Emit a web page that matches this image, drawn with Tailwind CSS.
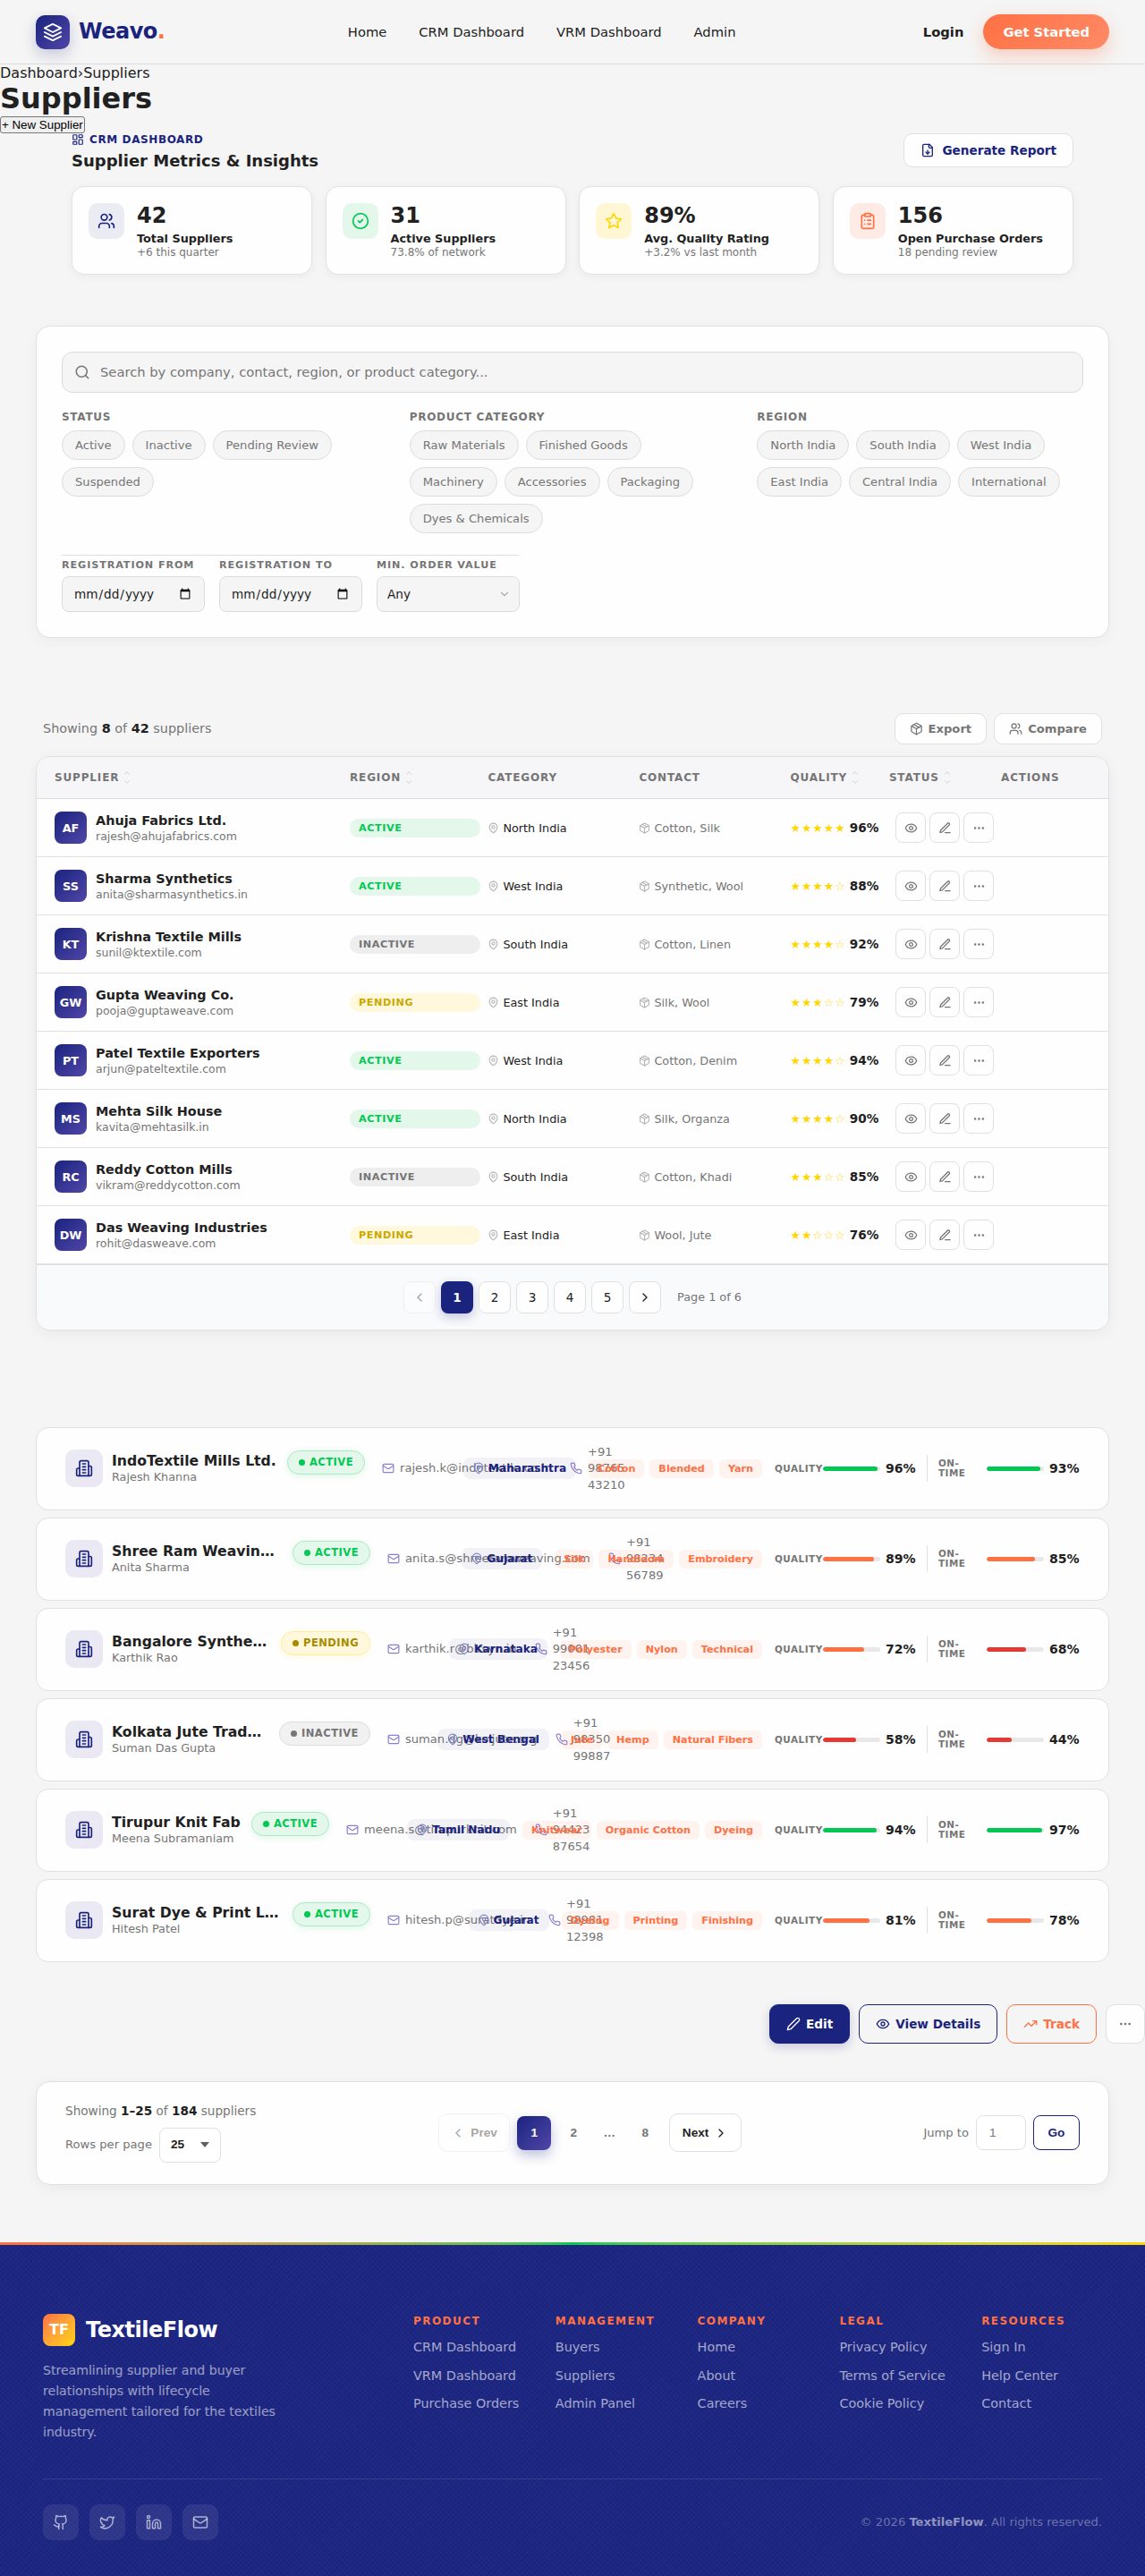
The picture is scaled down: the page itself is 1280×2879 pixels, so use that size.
<!DOCTYPE html>
<html lang="en">
<head>
<meta charset="utf-8">
<title>Weavo - Suppliers</title>
<script src="https://cdn.jsdelivr.net/npm/@tailwindcss/browser@4"></script>
</head>
<body class="w-[1280px] overflow-x-hidden bg-[#f5f5f5] font-['DejaVu_Sans',sans-serif] text-base leading-[1.2] text-[#212121]">

<svg class="hidden" xmlns="http://www.w3.org/2000/svg">
  <symbol id="layers" viewBox="0 0 24 24"><path d="m12 2 10 5-10 5L2 7z"/><path d="m2 12 10 5 10-5"/><path d="m2 17 10 5 10-5"/></symbol>
  <symbol id="grid" viewBox="0 0 24 24"><rect x="3" y="3" width="7" height="9" rx="1"/><rect x="14" y="3" width="7" height="5" rx="1"/><rect x="14" y="12" width="7" height="9" rx="1"/><rect x="3" y="16" width="7" height="5" rx="1"/></symbol>
  <symbol id="filedown" viewBox="0 0 24 24"><path d="M15 2H6a2 2 0 0 0-2 2v16a2 2 0 0 0 2 2h12a2 2 0 0 0 2-2V7Z"/><path d="M14 2v4a2 2 0 0 0 2 2h4"/><path d="M12 18v-6"/><path d="m9 15 3 3 3-3"/></symbol>
  <symbol id="users" viewBox="0 0 24 24"><path d="M16 21v-2a4 4 0 0 0-4-4H6a4 4 0 0 0-4 4v2"/><circle cx="9" cy="7" r="4"/><path d="M22 21v-2a4 4 0 0 0-3-3.870"/><path d="M16 3.130a4 4 0 0 1 0 7.750"/></symbol>
  <symbol id="check" viewBox="0 0 24 24"><circle cx="12" cy="12" r="10"/><path d="m9 12 2 2 4-4"/></symbol>
  <symbol id="star" viewBox="0 0 24 24"><polygon points="12 2 15.090 8.260 22 9.270 17 14.140 18.180 21.020 12 17.770 5.820 21.020 7 14.140 2 9.270 8.910 8.260 12 2"/></symbol>
  <symbol id="clip" viewBox="0 0 24 24"><rect x="8" y="2" width="8" height="4" rx="1"/><path d="M16 4h2a2 2 0 0 1 2 2v14a2 2 0 0 1-2 2H6a2 2 0 0 1-2-2V6a2 2 0 0 1 2-2h2"/><path d="M12 11h4M12 16h4M8 11h.01M8 16h.01"/></symbol>
  <symbol id="search" viewBox="0 0 24 24"><circle cx="11" cy="11" r="8"/><path d="m21 21-4.300-4.300"/></symbol>
  <symbol id="down" viewBox="0 0 24 24"><path d="m6 9 6 6 6-6"/></symbol>
  <symbol id="up" viewBox="0 0 24 24"><path d="m18 15-6-6-6 6"/></symbol>
  <symbol id="left" viewBox="0 0 24 24"><path d="m15 18-6-6 6-6"/></symbol>
  <symbol id="right" viewBox="0 0 24 24"><path d="m9 18 6-6-6-6"/></symbol>
  <symbol id="box" viewBox="0 0 24 24"><path d="m7.500 4.270 9 5.150"/><path d="M21 8a2 2 0 0 0-1-1.730l-7-4a2 2 0 0 0-2 0l-7 4A2 2 0 0 0 3 8v8a2 2 0 0 0 1 1.730l7 4a2 2 0 0 0 2 0l7-4A2 2 0 0 0 21 16Z"/><path d="m3.300 7 8.700 5 8.700-5"/><path d="M12 22V12"/></symbol>
  <symbol id="pin" viewBox="0 0 24 24"><path d="M20 10c0 6-8 12-8 12s-8-6-8-12a8 8 0 0 1 16 0Z"/><circle cx="12" cy="10" r="3"/></symbol>
  <symbol id="eye" viewBox="0 0 24 24"><path d="M2 12s3-7 10-7 10 7 10 7-3 7-10 7-10-7-10-7Z"/><circle cx="12" cy="12" r="3"/></symbol>
  <symbol id="penline" viewBox="0 0 24 24"><path d="M12 20h9"/><path d="M16.500 3.500a2.120 2.120 0 0 1 3 3L7 19l-4 1 1-4Z"/></symbol>
  <symbol id="pencil" viewBox="0 0 24 24"><path d="M17 3a2.850 2.830 0 1 1 4 4L7.500 20.500 2 22l1.500-5.500Z"/></symbol>
  <symbol id="dots" viewBox="0 0 24 24"><circle cx="12" cy="12" r="1"/><circle cx="19" cy="12" r="1"/><circle cx="5" cy="12" r="1"/></symbol>
  <symbol id="building" viewBox="0 0 24 24"><path d="M6 22V4a2 2 0 0 1 2-2h8a2 2 0 0 1 2 2v18Z"/><path d="M6 12H4a2 2 0 0 0-2 2v6a2 2 0 0 0 2 2h2"/><path d="M18 9h2a2 2 0 0 1 2 2v9a2 2 0 0 1-2 2h-2"/><path d="M10 6h4M10 10h4M10 14h4M10 18h4"/></symbol>
  <symbol id="mail" viewBox="0 0 24 24"><rect x="2" y="4" width="20" height="16" rx="2"/><path d="m22 7-8.970 5.700a1.940 1.940 0 0 1-2.060 0L2 7"/></symbol>
  <symbol id="phone" viewBox="0 0 24 24"><path d="M22 16.920v3a2 2 0 0 1-2.180 2 19.790 19.790 0 0 1-8.630-3.070 19.500 19.500 0 0 1-6-6 19.790 19.790 0 0 1-3.070-8.670A2 2 0 0 1 4.110 2h3a2 2 0 0 1 2 1.720 12.840 12.840 0 0 0 .7 2.810 2 2 0 0 1-.45 2.110L8.090 9.910a16 16 0 0 0 6 6l1.270-1.270a2 2 0 0 1 2.110-.45 12.840 12.840 0 0 0 2.810.7A2 2 0 0 1 22 16.920z"/></symbol>
  <symbol id="trend" viewBox="0 0 24 24"><path d="m22 7-8.500 8.500-5-5L2 17"/><path d="M16 7h6v6"/></symbol>
  <symbol id="github" viewBox="0 0 24 24"><path d="M15 22v-4a4.800 4.800 0 0 0-1-3.500c3 0 6-2 6-5.500.08-1.250-.27-2.480-1-3.500.28-1.150.28-2.350 0-3.500 0 0-1 0-3 1.500-2.640-.5-5.360-.5-8 0C6 2 5 2 5 2c-.3 1.150-.3 2.350 0 3.500A5.400 5.400 0 0 0 4 9c0 3.500 3 5.500 6 5.500-.39.490-.68 1.050-.85 1.650-.17.600-.22 1.230-.15 1.850v4"/><path d="M9 18c-4.510 2-5-2-7-2"/></symbol>
  <symbol id="twitter" viewBox="0 0 24 24"><path d="M22 4s-.7 2.100-2 3.400c1.600 10-9.400 17.300-18 11.600 2.200.1 4.400-.6 6-2C3 15.500.5 9.600 3 5c2.200 2.600 5.600 4.100 9 4-.9-4.200 4-6.600 7-3.800 1.100 0 3-1.200 3-1.200z"/></symbol>
  <symbol id="linkedin" viewBox="0 0 24 24"><path d="M16 8a6 6 0 0 1 6 6v7h-4v-7a2 2 0 0 0-4 0v7h-4v-7a6 6 0 0 1 6-6z"/><rect x="2" y="9" width="4" height="12"/><circle cx="4" cy="4" r="2"/></symbol>
</svg>

<header class="flex h-[72px] items-center justify-between border-b border-[#dcdcdc] px-10">
  <div class="flex items-center gap-2.5">
    <div class="flex size-[38px] items-center justify-center rounded-[10px] bg-linear-135 from-[#1a237e] to-[#5146a8] text-white shadow-[0_6px_16px_rgba(26,35,126,0.22)]"><svg class="size-[22px] fill-none stroke-current stroke-2 [stroke-linecap:round] [stroke-linejoin:round]"><use href="#layers"/></svg></div>
    <div class="text-2xl leading-[1.2] font-bold tracking-[-0.02em] text-[#1a237e]">Weavo<span class="text-[#ff7043]">.</span></div>
  </div>
  <nav class="mr-[5px] flex gap-9 text-[14.720px]"><a>Home</a><a>CRM Dashboard</a><a>VRM Dashboard</a><a>Admin</a></nav>
  <div class="flex items-center gap-[22px] text-[14.720px] font-bold">
    <a>Login</a>
    <a class="flex h-[39px] items-center rounded-full bg-linear-135 from-[#ff7043] to-[#ff8a65] px-[22px] text-white shadow-[0_8px_20px_rgba(255,112,67,0.3)]">Get Started</a>
  </div>
</header>

<div>Dashboard›Suppliers</div>
<h1 class="text-[32px] leading-[38.400px] font-bold">Suppliers</h1>
<div class="h-[19.400px]"><button class="block h-[19px] rounded-[3px] border border-[#767676] bg-[#efefef] px-px font-['Liberation_Sans',sans-serif] text-[13.333px] leading-[15px] text-black">+ New Supplier</button></div>

<section class="mx-20">
  <div class="flex h-[38px] items-start justify-between">
    <div>
      <div class="flex items-center gap-1.5 text-xs leading-[14px] font-bold tracking-[0.05em] text-[#1a237e]"><svg class="size-3.5 fill-none stroke-current stroke-2 [stroke-linecap:round] [stroke-linejoin:round]"><use href="#grid"/></svg>CRM DASHBOARD</div>
      <h2 class="mt-[6px] text-[18px] leading-[22px] font-bold">Supplier Metrics &amp; Insights</h2>
    </div>
    <button class="flex h-[38px] items-center gap-2 rounded-[10px] border border-[#e0e0e0] bg-[#fefefe] px-[18px] text-[13.600px] font-bold text-[#1a237e]"><svg class="size-4 fill-none stroke-current stroke-2 [stroke-linecap:round] [stroke-linejoin:round]"><use href="#filedown"/></svg>Generate Report</button>
  </div>
  <div id="metrics" class="mt-[21px] grid grid-cols-4 gap-[14.400px]"></div>
</section>

<section class="mx-10 mt-[57px] h-[349px] rounded-2xl border border-[#e2e2e2] bg-[#fefefe] p-7 shadow-[0_4px_16px_rgba(0,0,0,0.04)]">
  <div class="flex h-[46px] items-center gap-[11px] rounded-xl border border-[#dcdcdc] bg-[#f5f5f5] px-[13px] text-[14.720px] text-[#757575]"><svg class="size-[18px] fill-none stroke-current stroke-2 [stroke-linecap:round] [stroke-linejoin:round]"><use href="#search"/></svg>Search by company, contact, region, or product category...</div>
  <div id="filters" class="mt-5 grid grid-cols-3 gap-6"></div>
  <div class="mt-6 grid w-[512px] grid-cols-3 gap-4 border-t border-[#e0e0e0] pt-1">
    <label class="block"><span class="block text-[11.200px] leading-[13px] font-bold tracking-[0.08em] whitespace-nowrap text-[#757575]">REGISTRATION FROM</span><input type="date" class="mt-1.5 block h-10 w-full rounded-lg border border-[#dcdcdc] bg-[#f5f5f5] px-3 text-[13.600px]"></label>
    <label class="block"><span class="block text-[11.200px] leading-[13px] font-bold tracking-[0.08em] whitespace-nowrap text-[#757575]">REGISTRATION TO</span><input type="date" class="mt-1.5 block h-10 w-full rounded-lg border border-[#dcdcdc] bg-[#f5f5f5] px-3 text-[13.600px]"></label>
    <div><span class="block text-[11.200px] leading-[13px] font-bold tracking-[0.08em] whitespace-nowrap text-[#757575]">MIN. ORDER VALUE</span><div class="mt-1.5 flex h-10 items-center justify-between rounded-lg border border-[#dcdcdc] bg-[#f5f5f5] pr-[9px] pl-[11px] text-[13.600px]">Any<svg class="size-3.5 fill-none stroke-[#aaaaaa] stroke-2 [stroke-linecap:round] [stroke-linejoin:round]"><use href="#down"/></svg></div></div>
  </div>
</section>

<section class="mx-10 mt-[84px]">
  <div class="flex h-[35px] items-center justify-between px-2">
    <div class="text-[14.400px] text-[#757575]">Showing <b class="text-[#212121]">8</b> of <b class="text-[#212121]">42</b> suppliers</div>
    <div class="flex gap-2 text-[13.120px] font-bold text-[#757575]">
      <button class="flex h-[35px] items-center gap-1.5 rounded-[10px] border border-[#e0e0e0] bg-[#fefefe] px-4"><svg class="size-[15px] fill-none stroke-current stroke-2 [stroke-linecap:round] [stroke-linejoin:round]"><use href="#box"/></svg>Export</button>
      <button class="flex h-[35px] items-center gap-1.5 rounded-[10px] border border-[#e0e0e0] bg-[#fefefe] px-4"><svg class="size-[15px] fill-none stroke-current stroke-2 [stroke-linecap:round] [stroke-linejoin:round]"><use href="#users"/></svg>Compare</button>
    </div>
  </div>
  <div class="mt-[13px] overflow-hidden rounded-2xl border border-[#e0e0e0] bg-[#fefefe] shadow-[0_4px_16px_rgba(0,0,0,0.05)]">
    <div id="thead" class="grid h-[47px] grid-cols-[2.2fr_1fr_1.1fr_1.1fr_0.7fr_0.8fr_100px] items-center gap-2 border-b border-[#dcdcdc] bg-[#f6f6f9] px-5 text-xs font-bold tracking-[0.07em] text-[#757575]"></div>
    <div id="rows"></div>
    <div class="flex h-[73px] items-center justify-center gap-1.5 border-t border-[#e0e0e0] bg-[#f9fafc] text-[13.600px]">
      <span class="flex size-9 items-center justify-center rounded-lg border border-[#e0e0e0] bg-white opacity-40"><svg class="size-4 fill-none stroke-current stroke-2 [stroke-linecap:round] [stroke-linejoin:round]"><use href="#left"/></svg></span>
      <span class="flex size-9 items-center justify-center rounded-lg bg-[#1a237e] font-bold text-white shadow-[0_4px_12px_rgba(26,35,126,0.25)]">1</span>
      <span class="flex size-9 items-center justify-center rounded-lg border border-[#e0e0e0] bg-[#fefefe]">2</span>
      <span class="flex size-9 items-center justify-center rounded-lg border border-[#e0e0e0] bg-[#fefefe]">3</span>
      <span class="flex size-9 items-center justify-center rounded-lg border border-[#e0e0e0] bg-[#fefefe]">4</span>
      <span class="flex size-9 items-center justify-center rounded-lg border border-[#e0e0e0] bg-[#fefefe]">5</span>
      <span class="flex size-9 items-center justify-center rounded-lg border border-[#e0e0e0] bg-[#fefefe]"><svg class="size-4 fill-none stroke-current stroke-2 [stroke-linecap:round] [stroke-linejoin:round]"><use href="#right"/></svg></span>
      <span class="ml-3 text-[12.800px] text-[#757575]">Page 1 of 6</span>
    </div>
  </div>
</section>

<section id="cards" class="mx-10 mt-[108px] flex flex-col gap-2"></section>

<div class="mt-[47px] flex h-11 justify-end gap-2.5 text-[13.600px] font-bold">
  <button class="flex items-center gap-1.5 rounded-[10px] border border-[#1a237e] bg-[#1a237e] px-[18px] text-white shadow-[0_4px_12px_rgba(26,35,126,0.2)]"><svg class="size-4 fill-none stroke-current stroke-2 [stroke-linecap:round] [stroke-linejoin:round]"><use href="#pencil"/></svg>Edit</button>
  <button class="flex items-center gap-1.5 rounded-[10px] border border-[#1a237e] px-[18px] text-[#1a237e]"><svg class="size-4 fill-none stroke-current stroke-2 [stroke-linecap:round] [stroke-linejoin:round]"><use href="#eye"/></svg>View Details</button>
  <button class="flex items-center gap-1.5 rounded-[10px] border border-[#ff7043] px-[18px] text-[#ff7043]"><svg class="size-4 fill-none stroke-current stroke-2 [stroke-linecap:round] [stroke-linejoin:round]"><use href="#trend"/></svg>Track</button>
  <button class="flex w-11 items-center justify-center rounded-[10px] border border-[#e0e0e0] bg-[#fefefe] text-[#757575]"><svg class="size-4 fill-none stroke-current stroke-2 [stroke-linecap:round] [stroke-linejoin:round]"><use href="#dots"/></svg></button>
</div>

<section class="mx-10 mt-[42px] flex h-[116px] items-center justify-between rounded-2xl border border-[#e0e0e0] bg-[#fefefe] px-8 shadow-[0_4px_16px_rgba(0,0,0,0.05)]">
  <div>
    <div class="text-[13.600px] text-[#757575]">Showing <b class="text-[#212121]">1–25</b> of <b class="text-[#212121]">184</b> suppliers</div>
    <div class="mt-2.5 flex items-center gap-2 text-[13.120px] text-[#757575]">Rows per page
      <div class="flex h-[39px] w-[69px] items-center justify-between rounded-lg border border-[#e0e0e0] bg-white px-3 font-['Liberation_Sans',sans-serif] text-[13.600px] font-bold text-[#212121]">25<svg class="h-1.5 w-2.5 fill-[#616161]" viewBox="0 0 10 6"><path d="M0 0h10L5 6z"/></svg></div>
    </div>
  </div>
  <div class="flex items-center font-['Liberation_Sans',sans-serif] text-[13.600px] font-bold text-[#757575]">
    <span class="flex h-[43px] items-center gap-1.5 rounded-[10px] border border-[#e0e0e0] bg-white px-[13.500px] text-[#212121] opacity-40"><svg class="size-4 fill-none stroke-current stroke-2 [stroke-linecap:round] [stroke-linejoin:round]"><use href="#left"/></svg>Prev</span>
    <span class="mx-2 flex items-center gap-1.5">
      <span class="flex size-[38px] items-center justify-center rounded-lg bg-linear-135 from-[#1a237e] to-[#5146a8] text-white shadow-[0_6px_14px_rgba(26,35,126,0.28)]">1</span>
      <span class="flex size-[38px] items-center justify-center">2</span>
      <span class="flex w-[30px] items-center justify-center">…</span>
      <span class="flex size-[38px] items-center justify-center">8</span>
    </span>
    <span class="flex h-[43px] items-center gap-1.5 rounded-[10px] border border-[#e0e0e0] bg-white px-[13.500px] text-[#212121]">Next<svg class="size-4 fill-none stroke-current stroke-2 [stroke-linecap:round] [stroke-linejoin:round]"><use href="#right"/></svg></span>
  </div>
  <div class="flex items-center justify-end gap-2 text-[13.120px] text-[#757575]">Jump to
    <span class="flex h-[39px] w-14 items-center rounded-lg border border-[#e0e0e0] bg-white px-3.5 font-['Liberation_Sans',sans-serif] text-[13.600px]">1</span>
    <button class="h-[39px] w-[52px] rounded-lg border border-[#1a237e] bg-white font-['Liberation_Sans',sans-serif] text-[13.600px] font-bold text-[#1a237e]">Go</button>
  </div>
</section>

<footer class="mt-16 h-[373px] bg-[#1a237e] bg-[repeating-linear-gradient(45deg,transparent_0_2px,rgba(255,255,255,0.02)_2px_4px),repeating-linear-gradient(-45deg,transparent_0_2px,rgba(255,255,255,0.02)_2px_4px)] text-white">
  <div class="h-[3px] bg-linear-to-r from-[#ff7043] via-[#00c853] to-[#ffd600]"></div>
  <div class="mx-12 grid h-[262px] grid-cols-[390px_repeat(5,1fr)] gap-6 border-b border-white/10 pt-[77px]">
    <div>
      <div class="flex items-center gap-3"><div class="flex size-9 items-center justify-center rounded-lg bg-linear-135 from-[#ff7043] to-[#ffd600] text-base font-bold">TF</div><div class="text-2xl leading-9 font-bold tracking-[-0.02em]">TextileFlow</div></div>
      <p class="mt-4 w-[280px] text-[14.080px] leading-[23px] text-white/55">Streamlining supplier and buyer relationships with lifecycle management tailored for the textiles industry.</p>
    </div>
    <div class="contents" id="links"></div>
  </div>
  <div class="mx-12 mt-7 flex items-center justify-between">
    <div class="flex gap-3 text-white/60">
      <span class="flex size-10 items-center justify-center rounded-[10px] bg-white/8"><svg class="size-[18px] fill-none stroke-current stroke-2 [stroke-linecap:round] [stroke-linejoin:round]"><use href="#github"/></svg></span>
      <span class="flex size-10 items-center justify-center rounded-[10px] bg-white/8"><svg class="size-[18px] fill-none stroke-current stroke-2 [stroke-linecap:round] [stroke-linejoin:round]"><use href="#twitter"/></svg></span>
      <span class="flex size-10 items-center justify-center rounded-[10px] bg-white/8"><svg class="size-[18px] fill-none stroke-current stroke-2 [stroke-linecap:round] [stroke-linejoin:round]"><use href="#linkedin"/></svg></span>
      <span class="flex size-10 items-center justify-center rounded-[10px] bg-white/8"><svg class="size-[18px] fill-none stroke-current stroke-2 [stroke-linecap:round] [stroke-linejoin:round]"><use href="#mail"/></svg></span>
    </div>
    <div class="text-[13.120px] text-white/35">© 2026 <b class="text-white/50">TextileFlow</b>. All rights reserved.</div>
  </div>
</footer>

<script>
const icon = (id, cls) => `<svg class="${cls} shrink-0 fill-none stroke-current stroke-2 [stroke-linecap:round] [stroke-linejoin:round]"><use href="#${id}"/></svg>`;
const put = (id, list, fn) => { document.getElementById(id).innerHTML = list.map(fn).join(''); };

put('metrics', [
  ['users', 'bg-[#eaebf3] text-[#1a237e]', '42', 'Total Suppliers', '+6 this quarter'],
  ['check', 'bg-[#e3f7eb] text-[#00c853]', '31', 'Active Suppliers', '73.8% of network'],
  ['star', 'bg-[#fff6d4] text-[#ffd600]', '89%', 'Avg. Quality Rating', '+3.2% vs last month'],
  ['clip', 'bg-[#ffebe5] text-[#ff7043]', '156', 'Open Purchase Orders', '18 pending review'],
], ([ic, c, n, l, s]) => `<div class="flex h-[99px] gap-3.5 rounded-[14px] border border-[#e2e2e2] bg-[#fefefe] p-[18px] shadow-[0_2px_10px_rgba(26,35,126,0.05)]">
  <div class="flex size-10 shrink-0 items-center justify-center rounded-[10px] ${c}">${icon(ic, 'size-5')}</div>
  <div><div class="text-2xl leading-[28px] font-bold">${n}</div><div class="mt-[4px] text-[12.800px] leading-[15px] font-bold whitespace-nowrap">${l}</div><div class="mt-[1.500px] text-xs leading-[14px] text-[#757575]">${s}</div></div></div>`);

put('filters', [
  ['STATUS', ['Active', 'Inactive', 'Pending Review', 'Suspended']],
  ['PRODUCT CATEGORY', ['Raw Materials', 'Finished Goods', 'Machinery', 'Accessories', 'Packaging', 'Dyes &amp; Chemicals']],
  ['REGION', ['North India', 'South India', 'West India', 'East India', 'Central India', 'International']],
], ([t, chips]) => `<div><div class="text-xs leading-[14px] font-bold tracking-[0.06em] text-[#757575]">${t}</div><div class="mt-2 flex flex-wrap gap-2">${chips.map(c => `<span class="flex h-[33px] items-center rounded-full border border-[#dcdcdc] bg-[#f5f5f5] px-3.5 text-[13.120px] text-[#757575]">${c}</span>`).join('')}</div></div>`);

put('thead', [['SUPPLIER', 1], ['REGION', 1], ['CATEGORY', 0], ['CONTACT', 0], ['QUALITY', 1], ['STATUS', 1], ['ACTIONS', 0]],
  ([t, s]) => `<div class="flex items-center gap-1">${t}${s ? `<span class="flex flex-col text-[#c8c8c8]">${icon('up', 'size-2.5')}${icon('down', 'size-2.5')}</span>` : ''}</div>`);

const tone = { ACTIVE: 'bg-[#e3f7eb] text-[#00c853]', INACTIVE: 'bg-[#eeeeee] text-[#757575]', PENDING: 'bg-[#fff8dc] text-[#c9a800]' };
put('rows', [
  ['AF', 'Ahuja Fabrics Ltd.', 'rajesh@ahujafabrics.com', 'ACTIVE', 'North India', 'Cotton, Silk', 5, 96],
  ['SS', 'Sharma Synthetics', 'anita@sharmasynthetics.in', 'ACTIVE', 'West India', 'Synthetic, Wool', 4, 88],
  ['KT', 'Krishna Textile Mills', 'sunil@ktextile.com', 'INACTIVE', 'South India', 'Cotton, Linen', 4, 92],
  ['GW', 'Gupta Weaving Co.', 'pooja@guptaweave.com', 'PENDING', 'East India', 'Silk, Wool', 3, 79],
  ['PT', 'Patel Textile Exporters', 'arjun@pateltextile.com', 'ACTIVE', 'West India', 'Cotton, Denim', 4, 94],
  ['MS', 'Mehta Silk House', 'kavita@mehtasilk.in', 'ACTIVE', 'North India', 'Silk, Organza', 4, 90],
  ['RC', 'Reddy Cotton Mills', 'vikram@reddycotton.com', 'INACTIVE', 'South India', 'Cotton, Khadi', 3, 85],
  ['DW', 'Das Weaving Industries', 'rohit@dasweave.com', 'PENDING', 'East India', 'Wool, Jute', 2, 76],
], ([a, n, e, s, r, c, q, p]) => `<div class="grid h-[65px] grid-cols-[2.2fr_1fr_1.1fr_1.1fr_0.7fr_0.8fr_100px] items-center gap-2 border-b border-[#e0e0e0] px-5 pt-px">
  <div class="flex items-center gap-2.5"><div class="flex size-9 items-center justify-center rounded-lg bg-linear-135 from-[#1a237e] to-[#5146a8] text-[12.800px] font-bold text-white">${a}</div><div><div class="text-[14.400px] leading-[17px] font-bold">${n}</div><div class="mt-px text-[12.480px] leading-[15px] text-[#757575]">${e}</div></div></div>
  <div class="flex h-[21px] items-center rounded-full px-2.5 text-[11.200px] font-bold tracking-[0.05em] ${tone[s]}">${s}</div>
  <div class="flex items-center gap-1 text-[12.800px]"><span class="text-[#b3b3b3]">${icon('pin', 'size-[13px]')}</span>${r}</div>
  <div class="flex items-center gap-1 text-[12.800px] text-[#757575]"><span class="text-[#b3b3b3]">${icon('box', 'size-[13px]')}</span>${c}</div>
  <div class="flex items-center gap-1 whitespace-nowrap"><span class="text-[12.800px] tracking-[1px] text-[#ffd600]">${'★'.repeat(q)}${'☆'.repeat(5 - q)}</span><b class="text-[13.600px]">${p}%</b></div>
  <div class="flex justify-end gap-1 text-[#757575]">${['eye', 'penline', 'dots'].map(i => `<span class="flex size-[34px] items-center justify-center rounded-lg border border-[#e0e0e0]">${icon(i, 'size-[15px]')}</span>`).join('')}</div>
  <div></div></div>`);

const pill = {
  ACTIVE: 'border-[#a9e9c3] bg-[#e3f7eb] text-[#00c853] shadow-[0_2px_8px_rgba(0,200,83,0.12)]',
  PENDING: 'border-[#ffec99] bg-[#fff8dc] text-[#a68b00] shadow-[0_2px_8px_rgba(255,214,0,0.12)]',
  INACTIVE: 'border-[#dcdcdc] bg-[#f1f1f1] text-[#757575]',
};
const bar = v => `<span class="h-[5px] w-16 overflow-hidden rounded-full bg-[#e8e8e8]"><span class="block h-full rounded-full ${v >= 90 ? 'bg-[#00c853]' : v >= 70 ? 'bg-[#ff7043]' : 'bg-[#e53935]'}" style="width:${v}%"></span></span><b class="ml-1.5 w-[34px] text-[14.080px]">${v}%</b>`;
put('cards', [
  ['IndoTextile Mills Ltd.', 'Rajesh Khanna', 'w-[186px]', 'ACTIVE', 'rajesh.k@indotextile.co.in', '98765 43210', 'Maharashtra', ['Cotton', 'Blended', 'Yarn'], 96, 93],
  ['Shree Ram Weaving Co.', 'Anita Sharma', 'w-[192px] truncate', 'ACTIVE', 'anita.s@shreeramweaving.com', '98234 56789', 'Gujarat', ['Silk', 'Handloom', 'Embroidery'], 89, 85],
  ['Bangalore Synthetics', 'Karthik Rao', 'w-[179px] truncate', 'PENDING', 'karthik.r@blrsyn.in', '99001 23456', 'Karnataka', ['Polyester', 'Nylon', 'Technical'], 72, 68],
  ['Kolkata Jute Traders', 'Suman Das Gupta', 'w-[177px] truncate', 'INACTIVE', 'suman.dg@koljute.org', '98350 99887', 'West Bengal', ['Jute', 'Hemp', 'Natural Fibers'], 58, 44],
  ['Tirupur Knit Fab', 'Meena Subramaniam', 'w-[146px]', 'ACTIVE', 'meena.s@tirupurknit.com', '94423 87654', 'Tamil Nadu', ['Knitwear', 'Organic Cotton', 'Dyeing'], 94, 97],
  ['Surat Dye &amp; Print Ltd.', 'Hitesh Patel', 'w-[192px] truncate', 'ACTIVE', 'hitesh.p@suratdye.in', '98981 12398', 'Gujarat', ['Dyeing', 'Printing', 'Finishing'], 81, 78],
], ([n, who, w, s, mail, ph, reg, tags, q, o]) => `<div class="flex h-[93px] items-center rounded-[14px] border border-[#e0e0e0] bg-[#fefefe] px-8">
  <div class="flex size-[42px] shrink-0 items-center justify-center rounded-[10px] bg-linear-135 from-[#1a237e]/9 to-[#512da8]/11 text-[#1a237e]">${icon('building', 'size-5')}</div>
  <div class="ml-2.5 shrink-0"><div class="${w} text-[15.680px] leading-[19px] font-bold whitespace-nowrap">${n}</div><div class="mt-px text-[12.800px] leading-4 whitespace-nowrap text-[#757575]">${who}</div></div>
  <div class="mb-[14px] ml-2.5 flex h-[27px] shrink-0 items-center gap-[5px] rounded-full border px-3 text-[11.520px] font-bold tracking-[0.04em] ${pill[s]}"><span class="size-[7px] rounded-full bg-current"></span>${s}</div>
  <div class="ml-[19px] flex w-0 flex-1 items-center gap-5 text-[13.120px] leading-[18.400px] text-[#757575]">
    <span class="flex shrink-0 items-center gap-1.5 whitespace-nowrap"><span class="text-[#8c7fd0]">${icon('mail', 'size-3.5')}</span>${mail}</span>
    <span class="flex shrink-0 items-center gap-1.5"><span class="text-[#8c7fd0]">${icon('phone', 'size-3.5')}</span><span class="w-[42px]">+91 ${ph}</span></span>
  </div>
  <div class="flex shrink-0 items-center gap-3.5">
    <div class="flex h-6 items-center gap-1 rounded-lg bg-[#1a237e]/6 pr-[11px] pl-2.5 text-[12.160px] font-bold text-[#1a237e]"><span class="text-[#7d83c4]">${icon('pin', 'size-3.5')}</span>${reg}</div>
    <div class="flex gap-1.5">${tags.map(t => `<span class="flex h-[21px] items-center rounded-md bg-[#ff7043]/8 px-2.5 text-[11.200px] font-bold text-[#ff7043]">${t}</span>`).join('')}</div>
    <div class="flex items-center text-[10.400px] leading-[11px] font-bold">
      <span class="w-[54px] tracking-[0.05em] text-[#757575]">QUALITY</span>${bar(q)}
      <span class="mx-3 h-[30px] w-px bg-[#e0e0e0]"></span>
      <span class="w-[54px] tracking-[0.05em] text-[#757575]">ON-<br>TIME</span>${bar(o)}
    </div>
  </div></div>`);

put('links', [
  ['PRODUCT', 'CRM Dashboard', 'VRM Dashboard', 'Purchase Orders'],
  ['MANAGEMENT', 'Buyers', 'Suppliers', 'Admin Panel'],
  ['COMPANY', 'Home', 'About', 'Careers'],
  ['LEGAL', 'Privacy Policy', 'Terms of Service', 'Cookie Policy'],
  ['RESOURCES', 'Sign In', 'Help Center', 'Contact'],
], ([t, ...l]) => `<div><div class="text-xs leading-[17px] font-bold tracking-[0.12em] text-[#ff7043]">${t}</div><div class="mt-[12.500px] flex flex-col gap-[14.400px] text-[14.400px] leading-[17px] whitespace-nowrap text-white/60">${l.map(x => `<a>${x}</a>`).join('')}</div></div>`);
</script>
</body>
</html>
